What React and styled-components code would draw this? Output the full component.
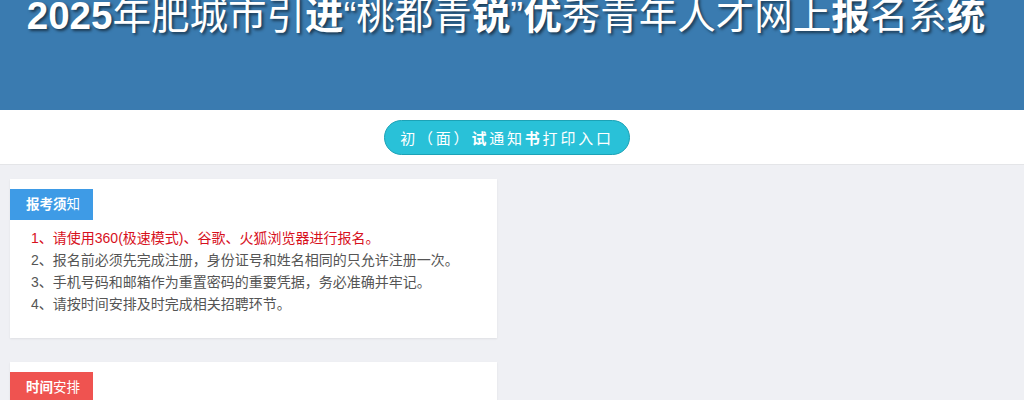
import styled, { createGlobalStyle } from "styled-components";

const Global = createGlobalStyle`
  html, body { margin: 0; padding: 0; }
  body {
    background: #eff0f4;
    font-family: "Liberation Sans", Arial, "Noto Sans CJK SC", sans-serif;
  }
`;

const Header = styled.header`
  height: 110px;
  background: #3a7bb0;
  overflow: hidden;
`;

const Title = styled.h1`
  margin: -5px 0 0;
  text-align: center;
  font-size: 38.5px;
  line-height: 42px;
  font-weight: normal;
  color: #fff;
  white-space: nowrap;
  text-shadow: 2px 2px 3px rgba(0, 0, 0, 0.55);
  padding-right: 12px;

  b { font-weight: bold; }
`;

const EntryBar = styled.div`
  height: 54px;
  background: #fff;
  border-bottom: 1px solid #e4e5e8;
  display: flex;
  align-items: center;
  justify-content: center;
`;

const EntryButton = styled.a`
  display: inline-flex;
  align-items: center;
  justify-content: center;
  box-sizing: border-box;
  width: 246px;
  height: 35px;
  margin: 1px 10px 0 0;
  border-radius: 18px;
  background: #29c1d8;
  border: 1px solid #1ca2b6;
  color: #fff;
  font-size: 15px;
  letter-spacing: 2.8px;
  text-decoration: none;
  cursor: pointer;

  b { font-weight: bold; }
`;

const Body = styled.main`
  display: grid;
  grid-template-columns: 487px 1fr;
  padding: 14px 10px 0;
`;

const Column = styled.div`
  display: flex;
  flex-direction: column;
  gap: 24px;
`;

const Card = styled.section`
  background: #fff;
  box-shadow: 0 1px 2px rgba(0, 0, 0, 0.07);
  padding: 10px 0 22px;
  min-height: ${(p) => p.$minHeight || 0}px;
  box-sizing: border-box;
`;

const Tag = styled.div`
  display: inline-block;
  height: 31px;
  line-height: 31px;
  padding: 0 13px 0 16px;
  background: ${(p) => p.$color};
  color: #fff;
  font-size: 13.5px;

  b { font-weight: bold; }
`;

const List = styled.ul`
  list-style: none;
  margin: 7px 0 0;
  padding: 0 0 0 21px;
`;

const Item = styled.li`
  font-size: 14px;
  line-height: 22px;
  color: ${(p) => (p.$warn ? "#d7111d" : "#555")};
  white-space: nowrap;
`;

const notices = [
  { text: "1、请使用360(极速模式)、谷歌、火狐浏览器进行报名。", warn: true },
  { text: "2、报名前必须先完成注册，身份证号和姓名相同的只允许注册一次。" },
  { text: "3、手机号码和邮箱作为重置密码的重要凭据，务必准确并牢记。" },
  { text: "4、请按时间安排及时完成相关招聘环节。" },
];

export default function App() {
  return (
    <>
      <Global />
      <Header>
        <Title>
          <b>2025</b>年肥城市引<b>进</b>“桃都青<b>锐</b>”<b>优</b>秀青年人才网上<b>报</b>名系<b>统</b>
        </Title>
      </Header>
      <EntryBar>
        <EntryButton>
          初（面）<b>试</b>通知<b>书</b>打印入口
        </EntryButton>
      </EntryBar>
      <Body>
        <Column>
          <Card $minHeight={159}>
            <Tag $color="#3e9be6">
              <b>报考须</b>知
            </Tag>
            <List>
              {notices.map((n, i) => (
                <Item key={i} $warn={n.warn}>
                  {n.text}
                </Item>
              ))}
            </List>
          </Card>
          <Card $minHeight={120}>
            <Tag $color="#ef5350">
              <b>时间</b>安排
            </Tag>
          </Card>
        </Column>
      </Body>
    </>
  );
}
